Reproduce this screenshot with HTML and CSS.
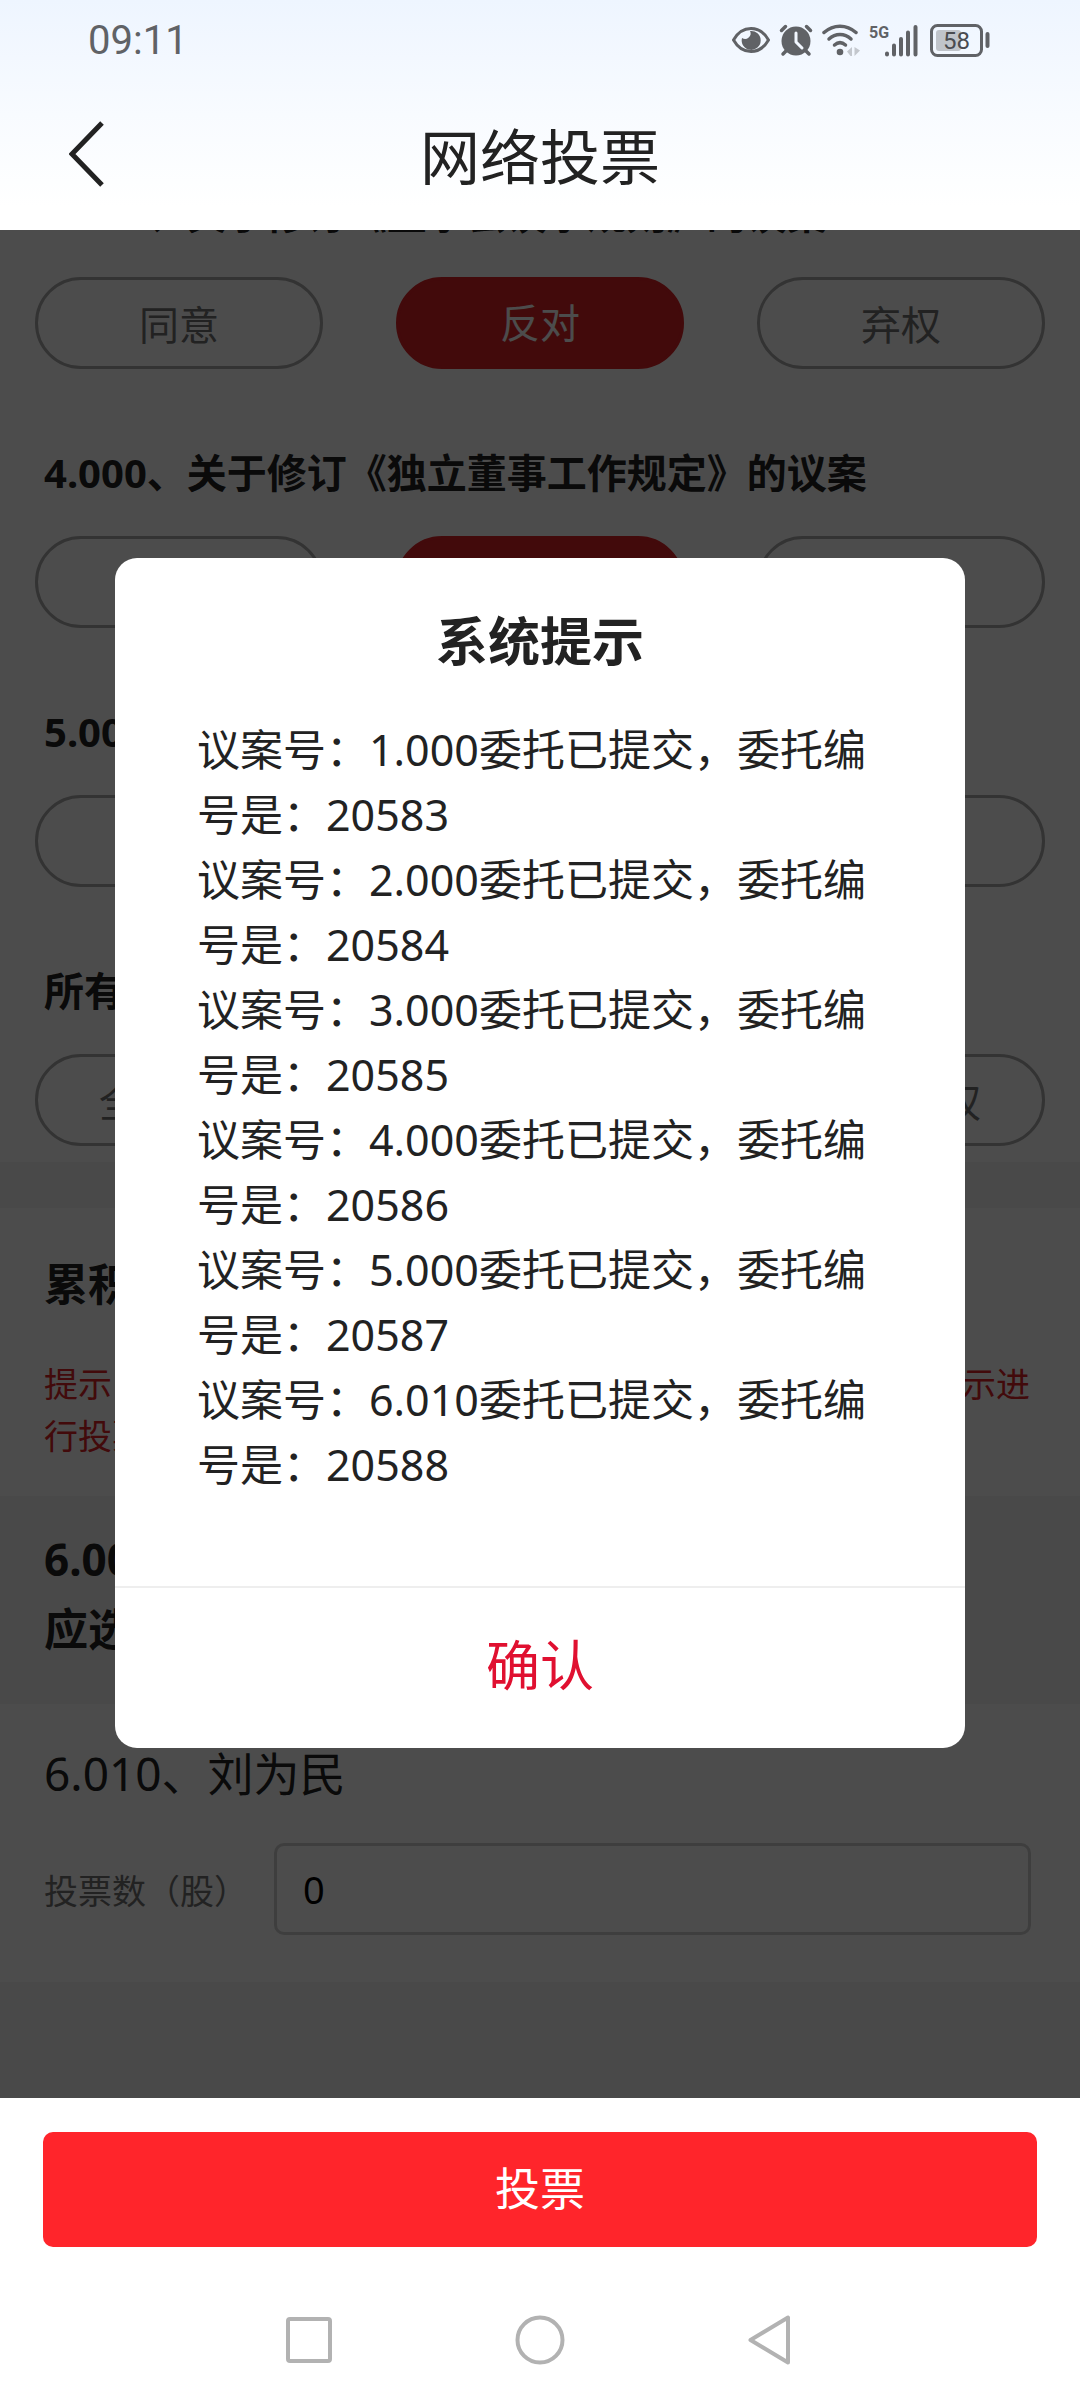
FILE: index.html
```html
<!DOCTYPE html>
<html lang="zh-CN">
  <head>
    <meta charset="UTF-8" />
    <meta name="viewport" content="width=device-width, initial-scale=1.0" />
    <title>网络投票</title>
    <link rel="stylesheet" href="styles.css">
  </head>
  <body>
    <header class="header">
      <div class="status-bar">
        <span class="time">09:11</span>
        <div class="status-icons">
          <!-- eye comfort -->
          <svg width="38" height="34" viewBox="0 0 38 34">
            <path d="M1.500 17C6 9 12 5.500 19 5.500S32 9 36.500 17C32 25 26 28.500 19 28.500S6 25 1.500 17z" fill="none" stroke="#606266" stroke-width="3" stroke-linejoin="round" />
            <path d="M18 8a9.500 9.500 0 1 1-8 7a5.500 5.500 0 0 0 8-7z" fill="#606266" />
          </svg>
          <!-- alarm -->
          <svg width="34" height="34" viewBox="0 0 34 34">
            <circle cx="17" cy="18" r="14.500" fill="#606266" />
            <path d="M2.500 7.500l4-4M31.500 7.500l-4-4M7 28l-3 3M27 28l3 3" stroke="#606266" stroke-width="3.500" stroke-linecap="round" />
            <path d="M17 10v9l6 6" fill="none" stroke="#f2f7ff" stroke-width="3" stroke-linecap="round" stroke-linejoin="round" />
          </svg>
          <!-- wifi -->
          <svg width="38" height="34" viewBox="0 0 38 34">
            <g fill="none" stroke="#606266" stroke-width="3.500" stroke-linecap="round">
              <path d="M2 9.500c9.500-8.500 22.500-8.500 32 0" />
              <path d="M7 16c6.500-6 15.500-6 22 0" />
              <path d="M12.500 22c3.500-3 7.500-3 11 0" />
            </g>
            <circle cx="18" cy="29" r="3.300" fill="#606266" />
            <path d="M30 24v9h-1.500L25 28.500zM32.500 24v9l5.500-5.500z" fill="#c3c7cd" />
          </svg>
          <!-- mobile signal -->
          <svg width="52" height="34" viewBox="0 0 52 34">
            <text x="0" y="15" class="network">5G</text>
            <path d="M18 30.500v1M25 22.500v9M32 16v15.500M39 9.500v22M46.500 4v27.500" stroke="#606266" stroke-width="4" stroke-linecap="round" />
          </svg>
          <!-- battery -->
          <svg width="60" height="34" viewBox="0 0 60 34">
            <rect x="1.500" y="2.500" width="50" height="30" rx="6" fill="none" stroke="#606266" stroke-width="3" />
            <rect x="6" y="7" width="25" height="21" rx="3" fill="#c0c4ca" />
            <path d="M57.500 11v12" stroke="#606266" stroke-width="4" stroke-linecap="round" />
            <text x="26.500" y="26" text-anchor="middle" class="battery">58</text>
          </svg>
        </div>
      </div>
      <div class="title-bar">
        <button class="back" aria-label="返回">
          <svg width="36" height="66" viewBox="0 0 36 66">
            <path d="M33 2L3 33l30 31" fill="none" stroke="#222" stroke-width="5" />
          </svg>
        </button>
        <h1>网络投票</h1>
      </div>
    </header>

    <main class="main">
      <div class="content">
        <section class="panel proposals">
          <div class="proposal">
            <h3>3.000、关于修订《董事会议事规则》的议案</h3>
            <div class="options">
              <button>同意</button>
              <button class="active">反对</button>
              <button>弃权</button>
            </div>
          </div>
          <div class="proposal">
            <h3>4.000、关于修订《独立董事工作规定》的议案</h3>
            <div class="options">
              <button>同意</button>
              <button class="active">反对</button>
              <button>弃权</button>
            </div>
          </div>
          <div class="proposal">
            <h3>5.000、关于修订《公司章程》的议案</h3>
            <div class="options">
              <button>同意</button>
              <button class="active">反对</button>
              <button>弃权</button>
            </div>
          </div>
          <div class="proposal">
            <h3>所有议案</h3>
            <div class="options">
              <button>全部同意</button>
              <button>全部反对</button>
              <button>全部弃权</button>
            </div>
          </div>
        </section>

        <section class="panel cumulative">
          <h2>累积投票议案</h2>
          <p class="tips">提示：请在下列候选人中分配您的投票数，可以均分，请按提示进行投票。</p>
        </section>

        <h2 class="group-title">6.000、关于补选董事的议案<br />应选人数1人</h2>

        <section class="panel candidate">
          <h3>6.010、刘为民</h3>
          <div class="field">
            <label for="votes">投票数（股）</label>
            <input type="text" id="votes" name="votes" inputmode="numeric" value="0" />
          </div>
        </section>
      </div>

      <div class="mask">
        <div class="dialog" role="dialog" aria-labelledby="dialogTitle">
          <h2 id="dialogTitle">系统提示</h2>
          <div class="message">
            <p>议案号：1.000委托已提交，委托编号是：20583</p>
            <p>议案号：2.000委托已提交，委托编号是：20584</p>
            <p>议案号：3.000委托已提交，委托编号是：20585</p>
            <p>议案号：4.000委托已提交，委托编号是：20586</p>
            <p>议案号：5.000委托已提交，委托编号是：20587</p>
            <p>议案号：6.010委托已提交，委托编号是：20588</p>
          </div>
          <button class="confirm">确认</button>
        </div>
      </div>
    </main>

    <footer class="footer">
      <button class="submit">投票</button>
    </footer>

    <nav class="system-nav">
      <button aria-label="最近任务">
        <svg width="54" height="54" viewBox="0 0 54 54"><rect x="6" y="6" width="42" height="42" rx="2" /></svg>
      </button>
      <button aria-label="主页">
        <svg width="54" height="54" viewBox="0 0 54 54"><circle cx="27" cy="27" r="22.500" /></svg>
      </button>
      <button aria-label="返回上一页">
        <svg width="54" height="54" viewBox="0 0 54 54"><path d="M44 4.500v45L6.500 27z" /></svg>
      </button>
    </nav>
  </body>
</html>
```

FILE: styles.css
```css
* {
  box-sizing: border-box;
}
body {
  margin: 0;
  min-height: 100vh;
  display: flex;
  flex-direction: column;
  font-family: "Noto Sans", "Noto Sans CJK SC", sans-serif;
  color: #222;
  background-color: #fff;
}
h1,
h2,
h3,
p {
  margin: 0;
}
button,
input {
  font-family: inherit;
  color: inherit;
}
button {
  padding: 0;
  border: none;
  background: none;
  cursor: pointer;
}
svg {
  display: block;
}

/* header */
.header {
  height: 230px;
  background: linear-gradient(#eef5ff, #f8fbff 50%, #fff 90%);
}
.status-bar {
  height: 80px;
  padding: 0 90px 0 88px;
  display: flex;
  align-items: center;
  justify-content: space-between;
}
.time {
  font-family: Roboto, sans-serif;
  font-size: 40px;
  color: #606266;
}
.status-icons {
  display: flex;
  gap: 9px;
}
.network {
  font-family: Roboto, sans-serif;
  font-size: 16px;
  font-weight: bold;
  fill: #606266;
}
.battery {
  font-family: Roboto, sans-serif;
  font-size: 24px;
  fill: #4a4c50;
}
.title-bar {
  height: 147px;
  padding: 0 69px;
  display: grid;
  grid-template-columns: 40px 1fr 40px;
  align-items: center;
}
.title-bar h1 {
  font-size: 60px;
  font-weight: normal;
  text-align: center;
}

/* vote list, scrolled under the header */
.main {
  position: relative;
  flex: 1;
  overflow: hidden;
  background-color: #f6f6f6;
}
.content {
  margin-top: -56px;
}
.panel {
  background-color: #fff;
}
.proposals {
  padding-bottom: 16px;
}
.proposal h3 {
  padding: 0 44px;
  font-size: 40px;
  line-height: 80px;
}
.options {
  display: flex;
  justify-content: space-between;
  padding: 23px 35px 64px;
}
.proposal:last-child .options {
  padding-bottom: 0;
}
.options button {
  width: 288px;
  height: 92px;
  border: 3px solid #aaa;
  border-radius: 46px;
  font-size: 40px;
  color: #737373;
}
.options .active {
  padding-bottom: 4px;
  border-color: #dc2226;
  background-color: #dc2226;
  color: #fff;
}
.cumulative {
  margin-top: 46px;
  padding: 36px 44px 34px;
}
.cumulative h2 {
  font-size: 44px;
  line-height: 80px;
}
.tips {
  padding-top: 34px;
  font-size: 34px;
  line-height: 52px;
  color: #dc2226;
}
.group-title {
  padding: 28px 44px 40px;
  font-size: 44px;
  line-height: 70px;
}
.candidate {
  padding: 34px 49px 47px 44px;
}
.candidate h3 {
  font-size: 46px;
  font-weight: normal;
  line-height: 70px;
}
.field {
  display: flex;
  align-items: center;
  gap: 26px;
  margin-top: 35px;
}
.field label {
  flex: none;
  font-size: 34px;
  color: #737373;
}
.field input {
  flex: 1;
  min-width: 0;
  height: 92px;
  padding: 0 26px;
  border: 3px solid #d0d0d0;
  border-radius: 10px;
  font-size: 38px;
  color: #000;
}

/* dialog */
.mask {
  position: absolute;
  inset: 0;
  display: flex;
  align-items: center;
  justify-content: center;
  padding: 0 115px 22px;
  background-color: rgba(0, 0, 0, 0.7);
}
.dialog {
  width: 100%;
  border-radius: 22px;
  background-color: #fff;
}
.dialog h2 {
  padding-top: 43px;
  font-size: 52px;
  line-height: 80px;
  text-align: center;
}
.message {
  padding: 36px 82px 89px;
  font-size: 43px;
  line-height: 65px;
}
.confirm {
  width: 100%;
  height: 162px;
  padding-bottom: 12px;
  border-top: 2px solid #eee;
  font-size: 54px;
  color: #e01030;
}

/* footer */
.footer {
  padding: 34px 43px 33px;
}
.submit {
  width: 100%;
  height: 115px;
  padding-bottom: 6px;
  border-radius: 10px;
  font-size: 45px;
  color: #fff;
  background-color: #ff252b;
}
.system-nav {
  height: 120px;
  padding: 0 282px;
  display: flex;
  align-items: center;
  justify-content: space-between;
}
.system-nav svg {
  fill: none;
  stroke: #b2b2b2;
  stroke-width: 4;
  stroke-linejoin: round;
}
```
